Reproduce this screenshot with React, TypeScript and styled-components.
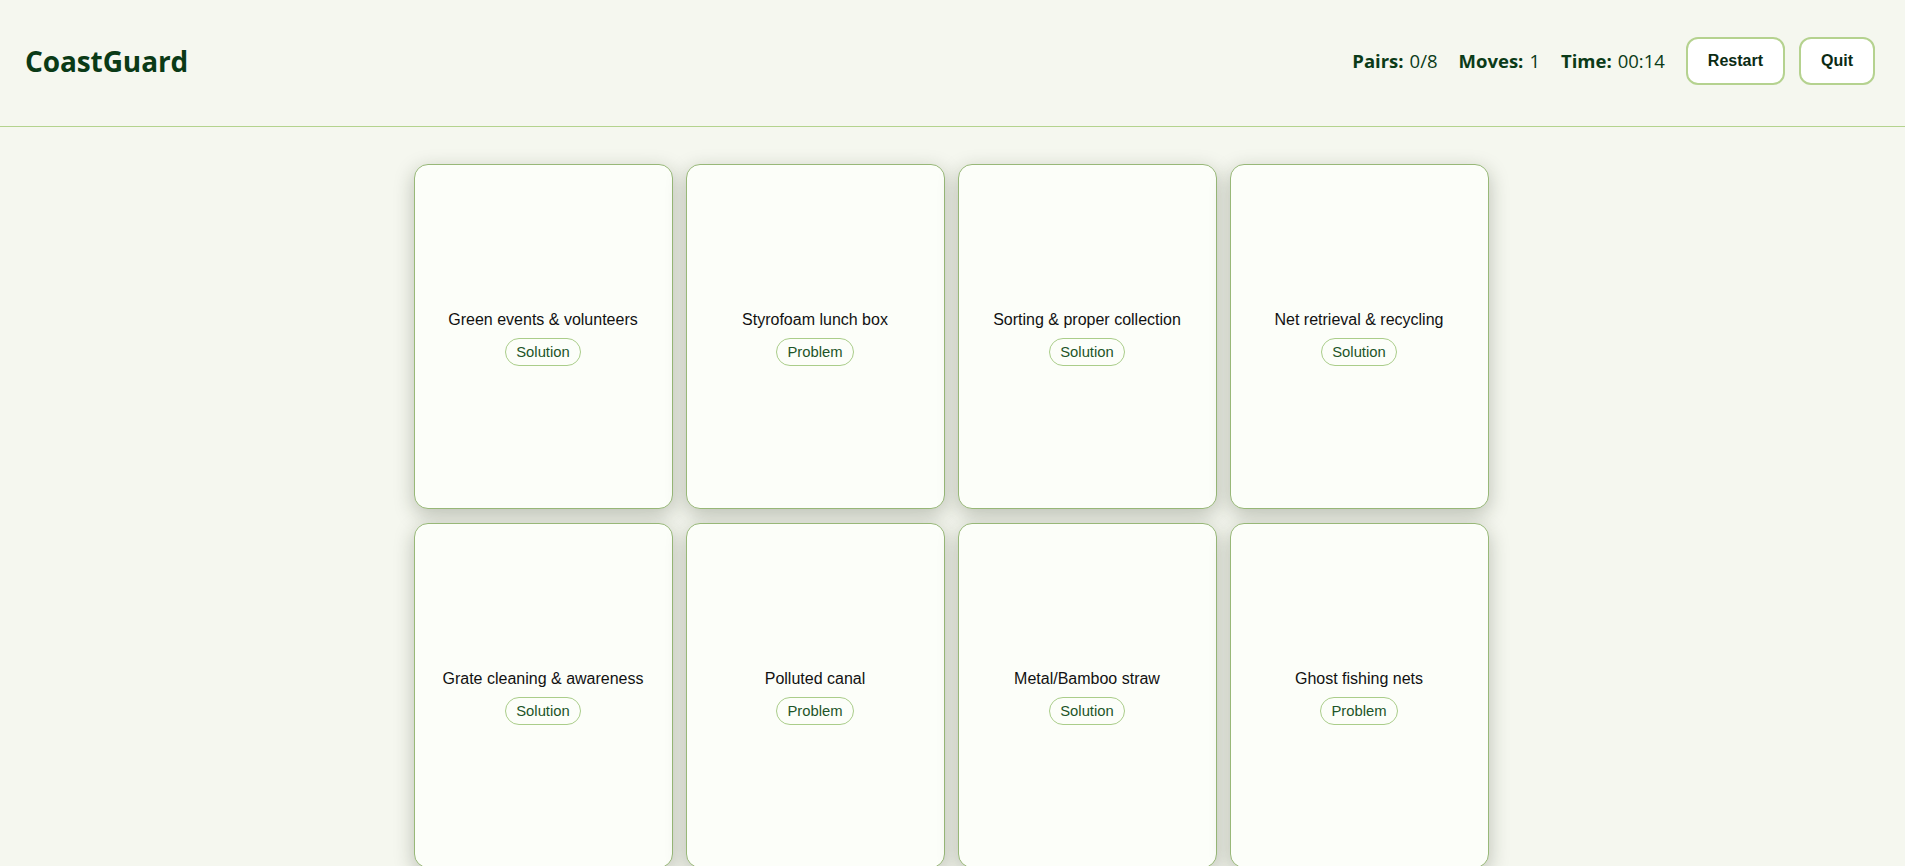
import React from "react";
import styled, { createGlobalStyle } from "styled-components";

const GlobalStyle = createGlobalStyle`
  html, body {
    margin: 0;
    padding: 0;
    background: #f5f7ef;
  }
  body {
    font-family: "Open Sans", "Liberation Sans", Arial, sans-serif;
    color: #0b2e14;
  }
  * { box-sizing: border-box; }
  ::-webkit-scrollbar { width: 4px; }
  ::-webkit-scrollbar-track { background: #2b2b2b; }
  ::-webkit-scrollbar-thumb { background: #3a3a3a; }
`;

const Page = styled.div`
  min-height: 100vh;
  background: #f5f7ef;
`;

const Header = styled.header`
  height: 127px;
  padding: 0 30px 5px 25px;
  border-bottom: 1px solid #b4d38e;
  display: flex;
  align-items: center;
  justify-content: space-between;
`;

const Title = styled.h1`
  margin: 0;
  font-family: "Open Sans", sans-serif;
  font-weight: 700;
  font-size: 28px;
  color: #0a3a16;
  letter-spacing: -0.1px;
`;

const Controls = styled.div`
  display: flex;
  align-items: center;
  gap: 21px;
`;

const Stats = styled.div`
  display: flex;
  align-items: center;
  gap: 21px;
`;

const Stat = styled.span`
  font-family: "Open Sans", sans-serif;
  font-size: 18.5px;
  color: #0b3b18;
  white-space: nowrap;
`;

const StatLabel = styled.b`
  font-weight: 700;
  margin-right: 6px;
`;

const Buttons = styled.div`
  display: flex;
  gap: 14px;
`;

const Button = styled.button`
  height: 48px;
  padding: 0 20px;
  border: 2px solid #b5d28f;
  border-radius: 12px;
  background: #ffffff;
  font-family: "Liberation Sans", Arial, sans-serif;
  font-weight: 700;
  font-size: 16px;
  color: #0b2b14;
  cursor: pointer;
`;

const Main = styled.main`
  padding: 37px 0 40px;
  display: flex;
  justify-content: center;
`;

const Grid = styled.div`
  display: grid;
  grid-template-columns: repeat(4, 259px);
  grid-auto-rows: 345px;
  gap: 14px 13px;
  margin-left: -3px;
`;

const Card = styled.div`
  background: #fcfef9;
  border: 1px solid #98b878;
  border-radius: 14px;
  box-shadow: 0 6px 20px rgba(30, 40, 20, 0.27);
  display: flex;
  flex-direction: column;
  align-items: center;
  justify-content: center;
  padding: 4px 12px 0;
`;

const CardTitle = styled.div`
  font-family: "Liberation Sans", Arial, sans-serif;
  font-size: 16px;
  color: #111111;
  text-align: center;
`;

const Badge = styled.span`
  margin-top: 9px;
  padding: 4px 10px;
  border: 1px solid #aacd8a;
  border-radius: 999px;
  font-family: "Liberation Sans", Arial, sans-serif;
  font-size: 14.8px;
  line-height: 18px;
  color: #1d5528;
  background: #fcfef9;
`;

const cards: { title: string; kind: "Solution" | "Problem" }[] = [
  { title: "Green events & volunteers", kind: "Solution" },
  { title: "Styrofoam lunch box", kind: "Problem" },
  { title: "Sorting & proper collection", kind: "Solution" },
  { title: "Net retrieval & recycling", kind: "Solution" },
  { title: "Grate cleaning & awareness", kind: "Solution" },
  { title: "Polluted canal", kind: "Problem" },
  { title: "Metal/Bamboo straw", kind: "Solution" },
  { title: "Ghost fishing nets", kind: "Problem" },
  { title: "Plastic straws", kind: "Problem" },
  { title: "Clogged drains", kind: "Problem" },
  { title: "Reusable food containers", kind: "Solution" },
  { title: "Mixed household waste", kind: "Problem" },
];

export default function App() {
  return (
    <Page>
      <GlobalStyle />
      <Header>
        <Title>CoastGuard</Title>
        <Controls>
          <Stats>
            <Stat>
              <StatLabel>Pairs:</StatLabel>0/8
            </Stat>
            <Stat>
              <StatLabel>Moves:</StatLabel>1
            </Stat>
            <Stat>
              <StatLabel>Time:</StatLabel>00:14
            </Stat>
          </Stats>
          <Buttons>
            <Button>Restart</Button>
            <Button>Quit</Button>
          </Buttons>
        </Controls>
      </Header>
      <Main>
        <Grid>
          {cards.map((c, i) => (
            <Card key={i}>
              <CardTitle>{c.title}</CardTitle>
              <Badge>{c.kind}</Badge>
            </Card>
          ))}
        </Grid>
      </Main>
    </Page>
  );
}
